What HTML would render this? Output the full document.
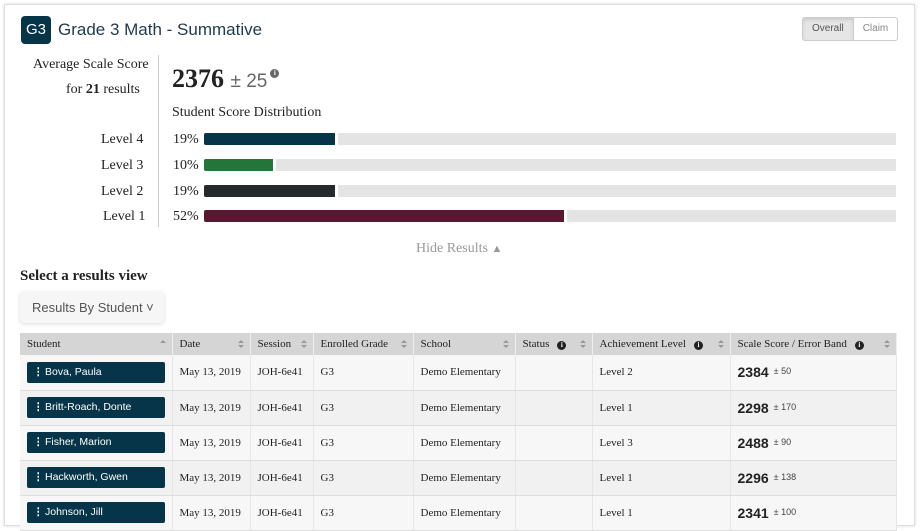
<!DOCTYPE html><html><head><style>
html,body{margin:0;background:#fff;width:921px;height:511px;overflow:hidden;font-family:"Liberation Serif",serif;color:#222}
.card{position:absolute;left:4px;top:4px;width:909px;height:520px;border:1px solid #ddd;box-shadow:0 0 3px rgba(0,0,0,.15);background:#fff}
.badge{position:absolute;left:21px;top:16px;width:30px;height:28px;background:#063549;border-radius:4px;color:#fff;font:15px "Liberation Sans",sans-serif;text-align:center;line-height:28px}
.title{position:absolute;left:58px;top:20px;font:17px "Liberation Sans",sans-serif;color:#1e3a4c}
.tog{position:absolute;left:802px;top:17px;display:flex;font:10px "Liberation Sans",sans-serif;color:#555}
.tog div{border:1px solid #ccc;height:22px;line-height:22px;padding:0 9px}
.tog div:first-child{background:#e6e6e6;border-radius:3px 0 0 3px;box-shadow:inset 0 2px 3px rgba(0,0,0,.12)}
.tog div:last-child{border-left:none;border-radius:0 3px 3px 0;color:#888}
.vl{position:absolute;left:158px;top:55px;width:1px;height:172px;background:#ccc}
.r{position:absolute;font-size:14px}
.bar{position:absolute;left:204px;width:692px;height:12px;background:#e4e4e4}
.bar div{height:12px;border-radius:2px 0 0 2px;border-right:3px solid #fff}
table{position:absolute;left:20px;top:333px;width:877px;border-collapse:collapse;font-size:11px;table-layout:fixed}
th,td{box-sizing:border-box}
th{background:#d5d5d5;text-align:left;font-weight:normal;height:22px;padding:0 7px;border-right:1px solid #eee;position:relative}
th:after{content:"";position:absolute;right:6px;top:7px;border:3.5px solid transparent;border-bottom:3.5px solid #999;border-top:none}
th.s:before{content:"";position:absolute;right:6px;top:12px;border:3.5px solid transparent;border-top:3.5px solid #999;border-bottom:none}
td{height:35px;padding:0 7px;border-right:1px solid #e6e6e6;border-bottom:1px solid #ddd;background:#f7f7f7}
tr:nth-child(odd) td{background:#f1f1f1}
.nm{background:#063549;color:#fff;font:10.5px "Liberation Sans",sans-serif;height:21px;line-height:21px;border-radius:2px;padding-left:18px;position:relative;width:138px;box-sizing:border-box}
.nm:before{content:"⋮";position:absolute;left:6px;font-weight:bold}
.i{display:inline-block;width:9px;height:9px;border-radius:50%;background:#222;color:#fff;font-size:7px;line-height:9px;text-align:center;font-weight:bold;margin-left:8px;vertical-align:0}
.sc{font:bold 14px "Liberation Sans",sans-serif}.eb{font:9px "Liberation Sans",sans-serif;color:#444;margin-left:5px;vertical-align:3px}
</style></head><body>
<div class="card"></div>
<div class="badge">G3</div><div class="title">Grade 3 Math - Summative</div>
<div class="tog"><div>Overall</div><div>Claim</div></div>
<div class="r" style="left:33px;top:57px">Average Scale Score</div>
<div class="r" style="left:66px;top:82px">for <b>21</b> results</div>
<div class="vl"></div>
<div class="r" style="left:172px;top:64px;font-size:26px;font-weight:bold">2376 <span style="font:19px 'Liberation Sans',sans-serif;color:#666;font-weight:normal">± 25</span><span class="i" style="margin-left:3px;vertical-align:12px;background:#666">i</span></div>
<div class="r" style="left:172px;top:105px">Student Score Distribution</div>
<div class="r" style="left:101px;top:132px">Level 4</div><div class="r" style="left:173px;top:132px">19%</div>
<div class="bar" style="top:133px"><div style="width:131px;background:#063549"></div></div>
<div class="r" style="left:101px;top:158px">Level 3</div><div class="r" style="left:173px;top:158px">10%</div>
<div class="bar" style="top:159px"><div style="width:69px;background:#23753a"></div></div>
<div class="r" style="left:101px;top:184px">Level 2</div><div class="r" style="left:173px;top:184px">19%</div>
<div class="bar" style="top:185px"><div style="width:131px;background:#27292b"></div></div>
<div class="r" style="left:103px;top:209px">Level 1</div><div class="r" style="left:173px;top:209px">52%</div>
<div class="bar" style="top:210px"><div style="width:360px;background:#5a1830"></div></div>
<div class="r" style="left:416px;top:241px;color:#999">Hide Results <span style="font-family:'Liberation Sans';font-size:11px">&#9650;</span></div>
<div class="r" style="left:20px;top:268px;font-size:15px;font-weight:bold">Select a results view</div>
<div style="position:absolute;left:20px;top:292px;height:31px;background:#f6f6f6;border-radius:4px;box-shadow:0 1px 4px rgba(0,0,0,.15);font:13px 'Liberation Sans',sans-serif;color:#555;line-height:31px;padding-left:12px;box-sizing:border-box;width:144px">Results By Student ˅</div>
<table>
<colgroup><col style="width:152px"><col style="width:78px"><col style="width:63px"><col style="width:100px"><col style="width:102px"><col style="width:77px"><col style="width:138px"><col></colgroup>
<tr><th>Student</th><th class="s">Date</th><th class="s">Session</th><th class="s">Enrolled Grade</th><th class="s">School</th><th class="s">Status<span class="i">i</span></th><th class="s">Achievement Level<span class="i">i</span></th><th class="s">Scale Score / Error Band<span class="i">i</span></th></tr>
<tr><td><div class="nm">Bova, Paula</div></td><td>May 13, 2019</td><td>JOH-6e41</td><td>G3</td><td>Demo Elementary</td><td></td><td>Level 2</td><td><span class="sc">2384</span><span class="eb">± 50</span></td></tr>
<tr><td><div class="nm">Britt-Roach, Donte</div></td><td>May 13, 2019</td><td>JOH-6e41</td><td>G3</td><td>Demo Elementary</td><td></td><td>Level 1</td><td><span class="sc">2298</span><span class="eb">± 170</span></td></tr>
<tr><td><div class="nm">Fisher, Marion</div></td><td>May 13, 2019</td><td>JOH-6e41</td><td>G3</td><td>Demo Elementary</td><td></td><td>Level 3</td><td><span class="sc">2488</span><span class="eb">± 90</span></td></tr>
<tr><td><div class="nm">Hackworth, Gwen</div></td><td>May 13, 2019</td><td>JOH-6e41</td><td>G3</td><td>Demo Elementary</td><td></td><td>Level 1</td><td><span class="sc">2296</span><span class="eb">± 138</span></td></tr>
<tr><td><div class="nm">Johnson, Jill</div></td><td>May 13, 2019</td><td>JOH-6e41</td><td>G3</td><td>Demo Elementary</td><td></td><td>Level 1</td><td><span class="sc">2341</span><span class="eb">± 100</span></td></tr>
</table>
</body></html>
